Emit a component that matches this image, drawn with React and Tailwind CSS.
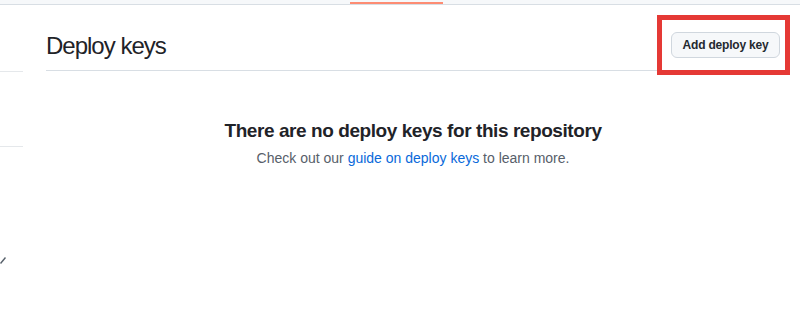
import React from "react";

function Sidebar() {
    return (
        <div className="w-[23px] shrink-0 flex flex-col">
            <div className="h-[67px] border-b border-[#e5e8eb]"></div>
            <div className="h-[75px] border-b border-[#e5e8eb]"></div>
            <div className="h-[110px]"></div>
            {/* cut-off icon stroke at the left edge */}
            <svg width="6" height="7" viewBox="0 0 6 7" className="block">
                <path d="M0.5 6.5 L5.5 0.5" stroke="#57606a" strokeWidth="1.5" fill="none" />
            </svg>
        </div>
    );
}

export default function App() {
    return (
        <div className="w-[800px] h-[320px] bg-white overflow-hidden relative" style={{fontFamily: '"Liberation Sans", Arial, sans-serif'}}>
            {/* top nav strip with the selected tab underline */}
            <div className="h-[5px] bg-[#f6f8fa] border-b border-[#d8dee4] flex">
                <div className="w-[350px]"></div>
                <div className="w-[93px] h-[2px] mt-[2px] bg-[#fd8c73]"></div>
            </div>

            <div className="flex">
                <Sidebar />
                <div className="ml-[23px] w-[734px]">
                    <div className="flex items-center justify-between pt-[27px] pb-[12px] border-b border-[#d8dee4]">
                        <h2 className="text-[24px] leading-[25px] text-[#1f2328] tracking-[-1px]">Deploy keys</h2>
                        <button className="h-[26px] w-[109px] rounded-md border border-[#d0d7de] bg-[#f6f8fa] text-[12px] font-bold text-[#24292f] leading-none tracking-[-0.2px]">
                            Add deploy key
                        </button>
                    </div>

                    <div className="mt-[45px] flex flex-col items-center">
                        <h3 className="text-[19px] leading-[30px] font-bold text-[#1f2328] tracking-[-0.43px]">
                            There are no deploy keys for this repository
                        </h3>
                        <p className="mt-[2px] text-[14px] leading-[21px] text-[#57606a]">
                            Check out our <a href="#" className="text-[#0969da]">guide on deploy keys</a> to learn more.
                        </p>
                    </div>
                </div>
            </div>

            {/* red annotation box around the button */}
            <div className="absolute left-[657px] top-[15px] w-[133px] h-[60px] border-[5px] border-[#e53935]"></div>
        </div>
    );
}
